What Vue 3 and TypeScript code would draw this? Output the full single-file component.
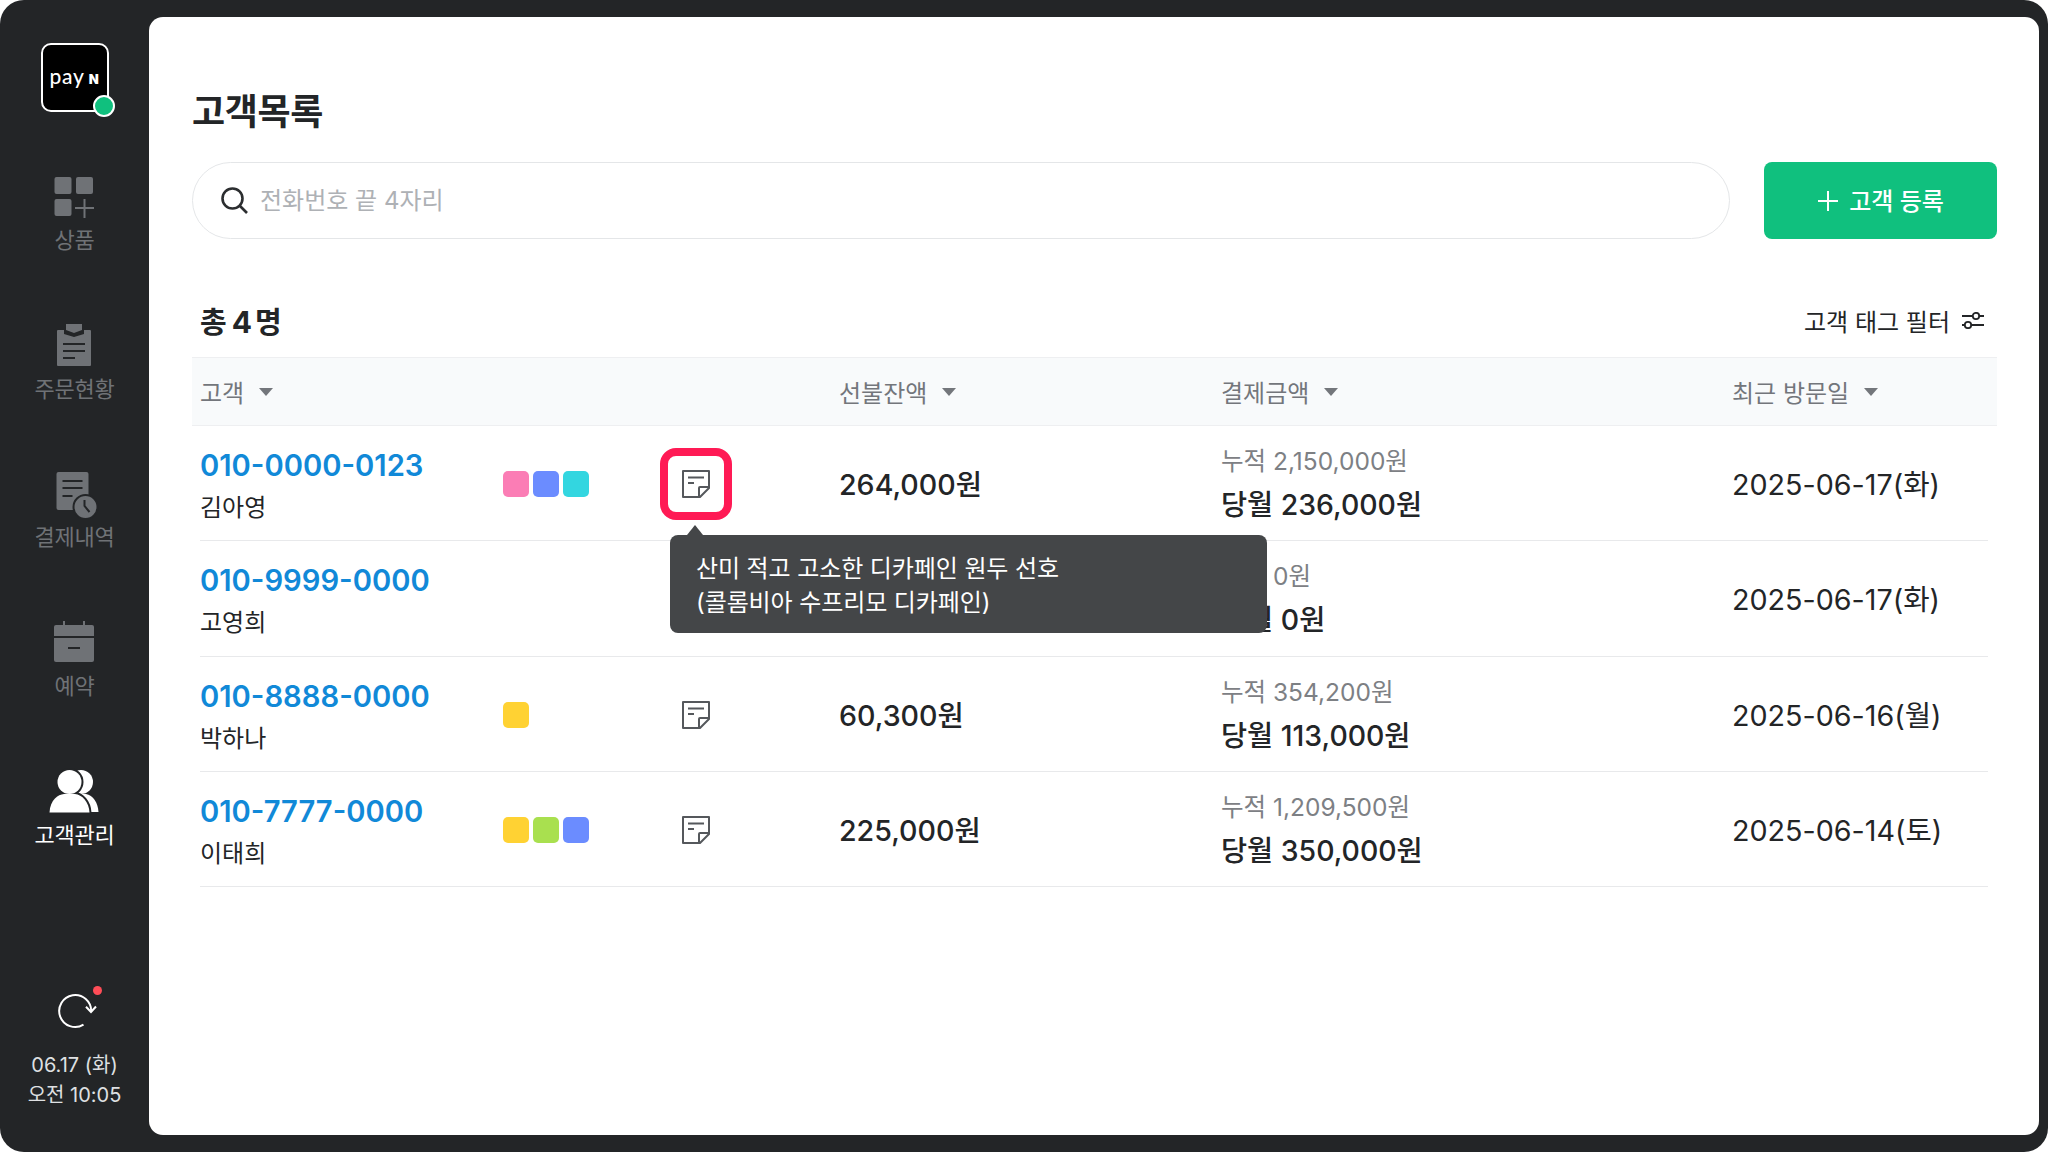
<script setup lang="ts">
interface Customer {
  phone: string
  name: string
  tags: string[]
  memo: boolean
  balance: string
  total: string
  month: string
  visit: string
}

const navItems = [
  { key: 'product', label: '상품' },
  { key: 'order', label: '주문현황' },
  { key: 'history', label: '결제내역' },
  { key: 'booking', label: '예약' },
  { key: 'customer', label: '고객관리' },
]

const pink = '#fb7db5'
const blue = '#6b8cff'
const cyan = '#33d6e0'
const yellow = '#ffd233'
const lime = '#a9e04f'

const customers: Customer[] = [
  { phone: '010-0000-0123', name: '김아영', tags: [pink, blue, cyan], memo: true, balance: '264,000원', total: '누적 2,150,000원', month: '당월 236,000원', visit: '2025-06-17(화)' },
  { phone: '010-9999-0000', name: '고영희', tags: [], memo: false, balance: '', total: '누적 0원', month: '당월 0원', visit: '2025-06-17(화)' },
  { phone: '010-8888-0000', name: '박하나', tags: [yellow], memo: true, balance: '60,300원', total: '누적 354,200원', month: '당월 113,000원', visit: '2025-06-16(월)' },
  { phone: '010-7777-0000', name: '이태희', tags: [yellow, lime, blue], memo: true, balance: '225,000원', total: '누적 1,209,500원', month: '당월 350,000원', visit: '2025-06-14(토)' },
]
</script>

<template>
  <div class="frame">
    <aside class="side">
      <div class="logo">
        <span class="logo-text">pay<b>N</b></span>
        <i class="logo-dot"></i>
      </div>
      <nav class="nav">
        <div v-for="item in navItems" :key="item.key" class="nav-item" :class="{ active: item.key === 'customer' }">
          <svg class="nav-icon" viewBox="0 0 44 44">
            <template v-if="item.key === 'product'">
              <rect x="2.500" y="2" width="17" height="17" rx="2" fill="currentColor" />
              <rect x="24" y="2" width="17" height="17" rx="2" fill="currentColor" />
              <rect x="2.500" y="24" width="17" height="17" rx="2" fill="currentColor" />
              <path d="M32.500 24v19M23 33h19" stroke="currentColor" stroke-width="2" fill="none" />
            </template>
            <template v-else-if="item.key === 'order'">
              <path d="M6 6h6v4l10 3 10-3V6h6a1 1 0 0 1 1 1v34a1 1 0 0 1-1 1H6a1 1 0 0 1-1-1V7a1 1 0 0 1 1-1z" fill="currentColor" />
              <path d="M14 0h16v6l-8 3-8-3z" fill="currentColor" />
              <path d="M11 20h22M11 27h22M11 34h12" stroke="#232527" stroke-width="2" fill="none" />
            </template>
            <template v-else-if="item.key === 'history'">
              <rect x="4.500" y="0" width="32" height="38" rx="2" fill="currentColor" />
              <path d="M10.500 9h20M10.500 16h20M10.500 24h10" stroke="#232527" stroke-width="2" fill="none" />
              <circle cx="33.500" cy="35" r="12" fill="currentColor" stroke="#232527" stroke-width="2" />
              <path d="M32.500 28v6l5 6" stroke="#232527" stroke-width="2" fill="none" />
            </template>
            <template v-else-if="item.key === 'booking'">
              <path d="M12 0v5M32 0v5" stroke="currentColor" stroke-width="2" />
              <path d="M4 4h36a2 2 0 0 1 2 2v9H2V6a2 2 0 0 1 2-2z" fill="currentColor" />
              <path d="M2 17h40v22a2 2 0 0 1-2 2H4a2 2 0 0 1-2-2z" fill="currentColor" />
              <path d="M16 27h12" stroke="#232527" stroke-width="2" />
            </template>
            <template v-else>
              <circle cx="29" cy="12" r="12" fill="currentColor" />
              <path d="M22 24h12c7 1 12 9 12.500 18H22z" fill="currentColor" />
              <g stroke="#232527" stroke-width="4">
                <circle cx="17.500" cy="12" r="12" fill="currentColor" />
                <path d="M-2.500 42.500c.5-12.500 8.500-18 14.500-18.500h11c7 .5 14 8 14.500 18.500z" fill="currentColor" />
              </g>
              <circle cx="17.500" cy="12" r="12" fill="currentColor" />
              <path d="M-2.500 42.500c.5-12.500 8.500-18 14.500-18.500h11c7 .5 14 8 14.500 18.500z" fill="currentColor" />
            </template>
          </svg>
          <span class="nav-label">{{ item.label }}</span>
        </div>
      </nav>
      <div class="side-foot">
        <div class="sync">
          <svg viewBox="0 0 38 38" class="sync-icon">
            <path d="M35.200 19.500A16 16 0 1 0 27.500 32.700" fill="none" stroke="currentColor" stroke-width="2" />
            <path d="M30 14.700l5 5.300 5-5.500" fill="none" stroke="currentColor" stroke-width="2" />
          </svg>
          <i class="sync-dot"></i>
        </div>
        <div class="clock">06.17 (화)<br />오전 10:05</div>
      </div>
    </aside>

    <main class="panel">
      <h1 class="title">고객목록</h1>
      <div class="search-row">
        <div class="search">
          <svg viewBox="0 0 28 28" class="search-icon">
            <circle cx="12.500" cy="12.500" r="10" fill="none" stroke="currentColor" stroke-width="2.600" />
            <path d="M20 20l7 7" stroke="currentColor" stroke-width="2.600" />
          </svg>
          <span class="placeholder">전화번호 끝 4자리</span>
        </div>
        <button class="add-btn">
          <svg viewBox="0 0 22 22" class="add-icon"><path d="M11 1v20M1 11h20" stroke="currentColor" stroke-width="2" /></svg>
          <span class="add-label">고객 등록</span>
        </button>
      </div>

      <div class="count-row">
        <div class="count">총<b>4</b>명</div>
        <div class="filter">
          고객 태그 필터
          <svg viewBox="0 0 24 17" class="filter-icon">
            <circle cx="15" cy="4" r="3.200" fill="none" stroke="currentColor" stroke-width="1.800" />
            <circle cx="7" cy="13" r="3.200" fill="none" stroke="currentColor" stroke-width="1.800" />
            <path d="M1 4h10.800M18.200 4H23M1 13h2.800M10.200 13H23" stroke="currentColor" stroke-width="1.800" fill="none" />
          </svg>
        </div>
      </div>

      <div class="table">
        <div class="thead">
          <div class="th c-user">고객 <i class="caret"></i></div>
          <div class="c-tags"></div>
          <div class="c-memo"></div>
          <div class="th c-balance">선불잔액 <i class="caret"></i></div>
          <div class="th c-pay">결제금액 <i class="caret"></i></div>
          <div class="th c-visit">최근 방문일 <i class="caret"></i></div>
        </div>
        <div v-for="(c, i) in customers" :key="c.phone" class="tr">
          <div class="c-user">
            <div class="phone">{{ c.phone }}</div>
            <div class="name">{{ c.name }}</div>
          </div>
          <div class="c-tags">
            <i v-for="(t, n) in c.tags" :key="n" class="tag" :style="{ background: t }"></i>
          </div>
          <div class="c-memo">
            <span class="memo-wrap" :class="{ focus: i === 0 }">
              <svg v-if="c.memo" viewBox="0 0 30 30" class="memo-icon">
                <path d="M2 2h26v17l-9 9H2z" fill="none" stroke="currentColor" stroke-width="2" stroke-linejoin="round" />
                <path d="M7 8.500h16M7 14h6" stroke="currentColor" stroke-width="2" />
                <path d="M28 18h-9a1 1 0 0 0-1 1v9" fill="none" stroke="currentColor" stroke-width="2" />
              </svg>
            </span>
            <div v-if="i === 0" class="tooltip">
              산미 적고 고소한 디카페인 원두 선호<br />(콜롬비아 수프리모 디카페인)
            </div>
          </div>
          <div class="c-balance balance">{{ c.balance }}</div>
          <div class="c-pay">
            <div class="total">{{ c.total }}</div>
            <div class="month">{{ c.month }}</div>
          </div>
          <div class="c-visit visit">{{ c.visit }}</div>
        </div>
      </div>
    </main>
  </div>
</template>

<style>
html,
body {
  margin: 0;
  background: #ffffff;
}
</style>

<style scoped>
.frame {
  width: 2048px;
  height: 1152px;
  box-sizing: border-box;
  display: flex;
  background: #232527;
  border-radius: 24px;
  padding: 17px 9px 17px 0;
  font-family: Inter, 'Noto Sans CJK KR', sans-serif;
  overflow: hidden;
}
.side {
  width: 149px;
  flex: none;
  display: flex;
  flex-direction: column;
  align-items: center;
}
.logo {
  position: relative;
  width: 68px;
  height: 69px;
  margin-top: 26px;
  border: 2px solid #fff;
  border-radius: 10px;
  background: #000;
  display: flex;
  align-items: center;
  justify-content: center;
  box-sizing: border-box;
}
.logo-text {
  margin-top: -5px;
  color: #fff;
  font-family: Lato, sans-serif;
  font-size: 21px;
  font-weight: 500;
  letter-spacing: 0.8px;
}
.logo-text b {
  font-family: Inter, sans-serif;
  font-size: 13px;
  font-weight: 900;
  margin-left: 4px;
}
.logo-dot {
  position: absolute;
  right: -8px;
  bottom: -7px;
  width: 18px;
  height: 18px;
  border: 2px solid #fff;
  border-radius: 50%;
  background: #10c07e;
}
.nav {
  display: flex;
  flex-direction: column;
  align-items: center;
  gap: 68.7px;
  margin-top: 63px;
}
.nav-item {
  display: flex;
  flex-direction: column;
  align-items: center;
  gap: 6px;
  color: #6f7276;
}
.nav-item.active {
  color: #fff;
}
.nav-icon {
  width: 44px;
  height: 44px;
  overflow: visible;
}
.nav-label {
  font-size: 22px;
  line-height: 30px;
  letter-spacing: -0.3px;
}
.side-foot {
  margin-top: auto;
  margin-bottom: 25px;
  display: flex;
  flex-direction: column;
  align-items: center;
  gap: 20px;
  color: #fff;
}
.sync {
  position: relative;
  width: 38px;
  height: 38px;
}
.sync-icon {
  width: 38px;
  height: 38px;
  overflow: visible;
}
.sync-dot {
  position: absolute;
  top: -6px;
  right: -8px;
  width: 9px;
  height: 9px;
  border-radius: 50%;
  background: #ff4d57;
}
.clock {
  font-size: 20px;
  line-height: 30px;
  text-align: center;
  color: #dfe0e2;
}
.panel {
  flex: 1;
  min-width: 0;
  background: #fff;
  border-radius: 14px;
  padding: 71px 42px 0 43px;
}
.title {
  margin: 0;
  font-size: 36px;
  line-height: 48px;
  font-weight: 600;
  color: #232527;
  letter-spacing: -0.4px;
}
.search-row {
  display: flex;
  gap: 34px;
  margin-top: 26px;
}
.search {
  flex: 1;
  height: 77px;
  box-sizing: border-box;
  border: 1px solid #e4e6e8;
  border-radius: 39px;
  display: flex;
  align-items: center;
  padding-left: 27px;
  gap: 12px;
  color: #2c2e30;
}
.search-icon {
  width: 28px;
  height: 28px;
  margin-top: -2px;
}
.placeholder {
  font-size: 24px;
  line-height: 34px;
  color: #aeb1b5;
}
.add-btn {
  width: 233px;
  height: 77px;
  border: none;
  border-radius: 8px;
  background: #10c07e;
  color: #fff;
  font: inherit;
  font-size: 24px;
  font-weight: 500;
  display: flex;
  align-items: center;
  justify-content: center;
  gap: 10px;
}
.add-icon {
  width: 22px;
  height: 22px;
}
.add-label {
  margin-top: -2px;
}
.count-row {
  display: flex;
  align-items: center;
  justify-content: space-between;
  height: 46px;
  margin-top: 58px;
  padding: 0 12px 0 8px;
}
.count {
  font-size: 29px;
  font-weight: 600;
  color: #232527;
}
.count b {
  font-size: 30px;
  font-weight: 700;
  margin: 0 3px 0 5px;
}
.filter {
  display: flex;
  align-items: center;
  gap: 11px;
  font-size: 24px;
  color: #232527;
}
.filter-icon {
  width: 24px;
  height: 17px;
}
.table {
  margin-top: 14px;
}
.thead,
.tr {
  display: grid;
  grid-template-columns: 303px 157px 179px 382px 511px 1fr;
  align-items: center;
}
.thead {
  height: 69px;
  box-sizing: border-box;
  background: #f8fafb;
  border-top: 1px solid #eeeff1;
  border-bottom: 1px solid #eeeff1;
  padding-left: 8px;
}
.tr {
  height: 115.25px;
  box-sizing: border-box;
  margin: 0 9px 0 8px;
  border-bottom: 1px solid #e8e9eb;
}
.th {
  font-size: 24px;
  color: #73767b;
  display: flex;
  align-items: center;
  gap: 15px;
}
.caret {
  width: 0;
  height: 0;
  border-left: 7px solid transparent;
  border-right: 7px solid transparent;
  border-top: 8px solid #73767b;
}
.c-user {
  padding-top: 6px;
}
.thead .c-user {
  padding-top: 0;
}
.phone {
  font-size: 29.2px;
  font-weight: 600;
  line-height: 40px;
  color: #1189d8;
}
.name {
  margin-top: 4px;
  font-size: 24px;
  line-height: 36px;
  color: #232527;
}
.c-tags {
  display: flex;
  gap: 4px;
  margin-top: 2px;
}
.tag {
  width: 26px;
  height: 26px;
  border-radius: 5px;
}
.c-memo {
  position: relative;
  margin-top: 2px;
}
.memo-wrap {
  display: flex;
  align-items: center;
  justify-content: center;
  width: 72px;
  height: 72px;
  box-sizing: border-box;
  color: #55585c;
}
.memo-wrap.focus {
  border: 8px solid #ff1a55;
  border-radius: 16px;
}
.memo-icon {
  width: 30px;
  height: 30px;
}
.tooltip {
  position: absolute;
  z-index: 2;
  top: 87px;
  left: 10px;
  width: 597px;
  height: 98px;
  box-sizing: border-box;
  padding: 17px 26px 0;
  border-radius: 8px;
  background: #444648;
  color: #fff;
  font-size: 24px;
  line-height: 34px;
  letter-spacing: -0.1px;
  white-space: nowrap;
}
.tooltip::before {
  content: '';
  position: absolute;
  top: -10px;
  left: 17px;
  border-left: 8px solid transparent;
  border-right: 8px solid transparent;
  border-bottom: 10px solid #444648;
}
.balance {
  font-size: 28.6px;
  font-weight: 500;
  margin-top: -1px;
  color: #232527;
}
.c-pay {
  padding-top: 3px;
}
.thead .c-pay {
  padding-top: 0;
}
.total {
  font-size: 24.5px;
  line-height: 36px;
  color: #7d8084;
}
.month {
  margin-top: 5px;
  font-size: 28.4px;
  line-height: 42px;
  font-weight: 500;
  color: #232527;
}
.visit {
  font-size: 28.7px;
  margin-top: -1px;
  color: #232527;
}
</style>
